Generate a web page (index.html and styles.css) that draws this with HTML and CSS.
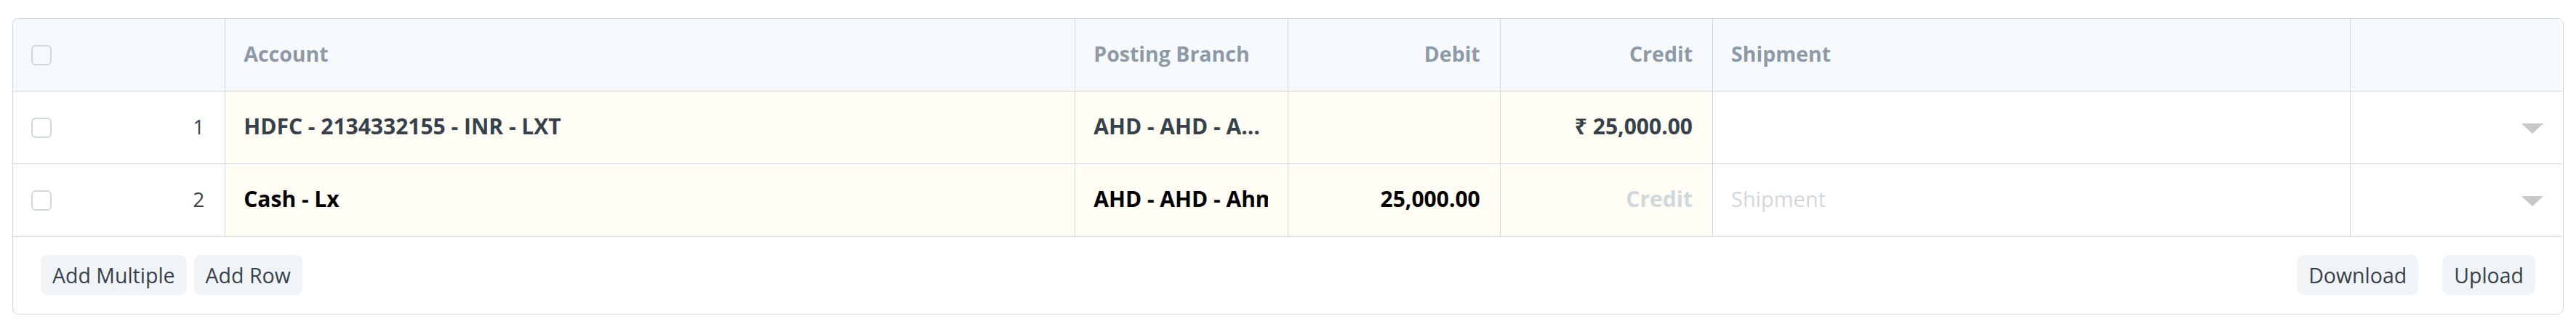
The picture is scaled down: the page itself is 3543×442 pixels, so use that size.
FILE: index.html
```html
<!DOCTYPE html>
<html lang="en">
<head>
    <meta charset="UTF-8">
    <meta name="viewport" content="width=device-width, initial-scale=1.0">
    <title>Accounts Grid</title>
    <link rel="stylesheet" href="styles.css">
</head>
<body>

<div class="page">
    <div class="grid">
        <div class="grid-row grid-heading">
            <div class="cell cell-index"><span class="check"></span></div>
            <div class="cell">Account</div>
            <div class="cell">Posting Branch</div>
            <div class="cell text-right">Debit</div>
            <div class="cell text-right">Credit</div>
            <div class="cell">Shipment</div>
            <div class="cell"></div>
        </div>

        <div class="grid-row">
            <div class="cell cell-index"><span class="check"></span><span class="row-no">1</span></div>
            <div class="cell bold"><span class="value">HDFC - 2134332155 - INR - LXT</span></div>
            <div class="cell bold"><span class="value ellipsis">AHD - AHD - Ahmedabad</span></div>
            <div class="cell bold text-right"></div>
            <div class="cell bold text-right"><span class="value">₹ 25,000.00</span></div>
            <div class="cell"></div>
            <div class="cell cell-caret"><span class="caret"></span></div>
        </div>

        <div class="grid-row">
            <div class="cell cell-index"><span class="check"></span><span class="row-no">2</span></div>
            <div class="cell bold"><span class="value editing">Cash - Lx</span></div>
            <div class="cell bold"><span class="value editing">AHD - AHD - Ahmedabad</span></div>
            <div class="cell bold text-right"><span class="value editing">25,000.00</span></div>
            <div class="cell bold text-right"><span class="value placeholder">Credit</span></div>
            <div class="cell"><span class="value placeholder light">Shipment</span></div>
            <div class="cell cell-caret"><span class="caret"></span></div>
        </div>

        <div class="grid-footer">
            <div class="btn-group">
                <button class="btn">Add Multiple</button>
                <button class="btn">Add Row</button>
            </div>
            <div class="btn-group right">
                <button class="btn">Download</button>
                <button class="btn">Upload</button>
            </div>
        </div>
    </div>
</div>

</body>
</html>
```

FILE: styles.css
```css
body {
    margin: 0;
    font-family: "Open Sans", "Noto Sans", sans-serif;
    font-size: 28px;
    color: #36414c;
    background: #fff;
}

.page {
    padding: 25px 17px 8px 17px;
}

.grid {
    border: 1px solid #d1d8dd;
    border-radius: 8px;
    overflow: hidden;
}

.grid-row {
    display: grid;
    grid-template-columns: 1fr 4fr 1fr 1fr 1fr 3fr 1fr;
    height: 100px;
    border-bottom: 1px solid #d1d8dd;
    box-sizing: border-box;
}

.grid-heading {
    background-color: #f7fafc;
    color: #8d99a6;
    font-weight: 700;
    font-size: 28.5px;
}

.cell {
    display: flex;
    align-items: center;
    padding: 0 27px 4px 25px;
    border-right: 1px solid #d1d8dd;
    min-width: 0;
    white-space: nowrap;
    overflow: hidden;
}

.cell:last-child {
    border-right: none;
}

.text-right {
    justify-content: flex-end;
}

.cell.bold {
    background-color: #fffdf4;
    font-weight: 700;
    font-size: 30px;
}

.value {
    overflow: hidden;
    min-width: 0;
}

.ellipsis {
    text-overflow: ellipsis;
}

.editing {
    color: #000;
}

.placeholder {
    color: #d1d8dd;
}

.placeholder.light {
    font-weight: 400;
    font-size: 29px;
}

.cell-index {
    justify-content: space-between;
    padding: 0 28px 0 25px;
}

.check {
    width: 28px;
    height: 28px;
    box-sizing: border-box;
    border: 2px solid #d1d8dd;
    border-radius: 6px;
}

.row-no {
    font-weight: 400;
    margin-bottom: 4px;
}

.cell-caret {
    justify-content: flex-end;
    padding-bottom: 0;
}

.caret {
    width: 0;
    height: 0;
    margin-top: 3px;
    border-left: 15px solid transparent;
    border-right: 15px solid transparent;
    border-top: 14px solid #c8c8c8;
}

.grid-footer {
    display: flex;
    justify-content: space-between;
    padding: 25px 38px 26px 38px;
}

.btn-group {
    display: flex;
    gap: 10px;
}

.btn-group.right {
    gap: 33px;
}

.btn {
    height: 55px;
    padding: 0 16px;
    border: none;
    border-radius: 9px;
    background-color: #f0f4f7;
    color: #36414c;
    font-family: inherit;
    font-size: 28.5px;
}
```
